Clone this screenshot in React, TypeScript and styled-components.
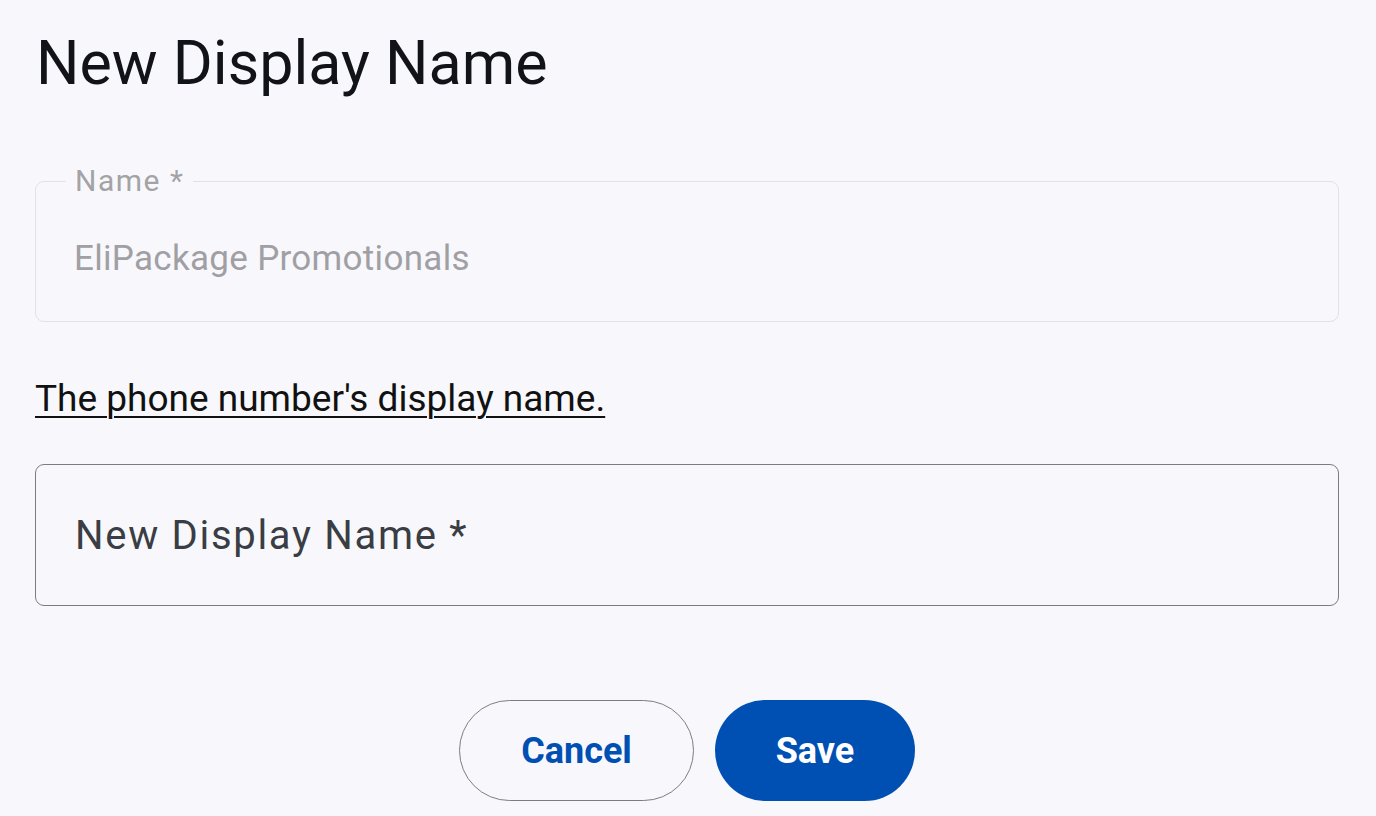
import styled, { createGlobalStyle } from "styled-components";

const GlobalStyle = createGlobalStyle`
  html, body {
    margin: 0;
    padding: 0;
    background: #f8f8fc;
  }
  body {
    font-family: Roboto, "Liberation Sans", sans-serif;
  }
`;

const Page = styled.div`
  width: 1376px;
  height: 816px;
  box-sizing: border-box;
  padding: 25px 37px 0 35px;
  display: flex;
  flex-direction: column;
  background: #f8f8fc;
  overflow: hidden;
`;

const Title = styled.h1`
  margin: 0 0 0 1px;
  font-size: 61px;
  line-height: 76px;
  font-weight: 400;
  color: #111318;
`;

const Fieldset = styled.fieldset`
  margin: 65px 0 0;
  padding: 0 30px;
  height: 156px;
  box-sizing: border-box;
  border: 1.5px solid #e2e2e6;
  border-radius: 9px;
`;

const Legend = styled.legend`
  padding: 0 9px;
  font-size: 30px;
  line-height: 30px;
  color: #a3a3a6;
  letter-spacing: 1.5px;
`;

const Value = styled.div`
  padding: 43px 0 0 8px;
  font-size: 35px;
  line-height: 40px;
  color: #a0a0a4;
  letter-spacing: 0.3px;
`;

const Helper = styled.a`
  margin-top: 55px;
  align-self: flex-start;
  font-size: 37px;
  line-height: 44px;
  color: #111;
  text-decoration: underline;
  text-underline-offset: 5px;
  text-decoration-thickness: 2px;
`;

const Input = styled.div`
  margin-top: 43px;
  height: 142px;
  box-sizing: border-box;
  border: 1.5px solid #7c7d83;
  border-radius: 9px;
  padding: 0 39px;
  display: flex;
  align-items: center;
  font-size: 40px;
  color: #3a3d44;
  letter-spacing: 1.7px;
`;

const Actions = styled.div`
  margin-top: 94px;
  display: flex;
  justify-content: center;
  gap: 21px;
`;

const Button = styled.button<{ $primary?: boolean }>`
  height: 101px;
  width: ${(p) => (p.$primary ? "200px" : "235px")};
  border-radius: 51px;
  box-sizing: border-box;
  font-family: Roboto, "Liberation Sans", sans-serif;
  font-size: 36px;
  font-weight: 700;
  border: ${(p) => (p.$primary ? "none" : "1.5px solid #7c7d83")};
  background: ${(p) => (p.$primary ? "#0050b3" : "transparent")};
  color: ${(p) => (p.$primary ? "#ffffff" : "#0050b3")};
  cursor: pointer;
`;

export default function App() {
  return (
    <>
      <GlobalStyle />
      <Page>
        <Title>New Display Name</Title>
        <Fieldset>
          <Legend>Name *</Legend>
          <Value>EliPackage Promotionals</Value>
        </Fieldset>
        <Helper href="#">The phone number's display name.</Helper>
        <Input>New Display Name *</Input>
        <Actions>
          <Button>Cancel</Button>
          <Button $primary>Save</Button>
        </Actions>
      </Page>
    </>
  );
}
